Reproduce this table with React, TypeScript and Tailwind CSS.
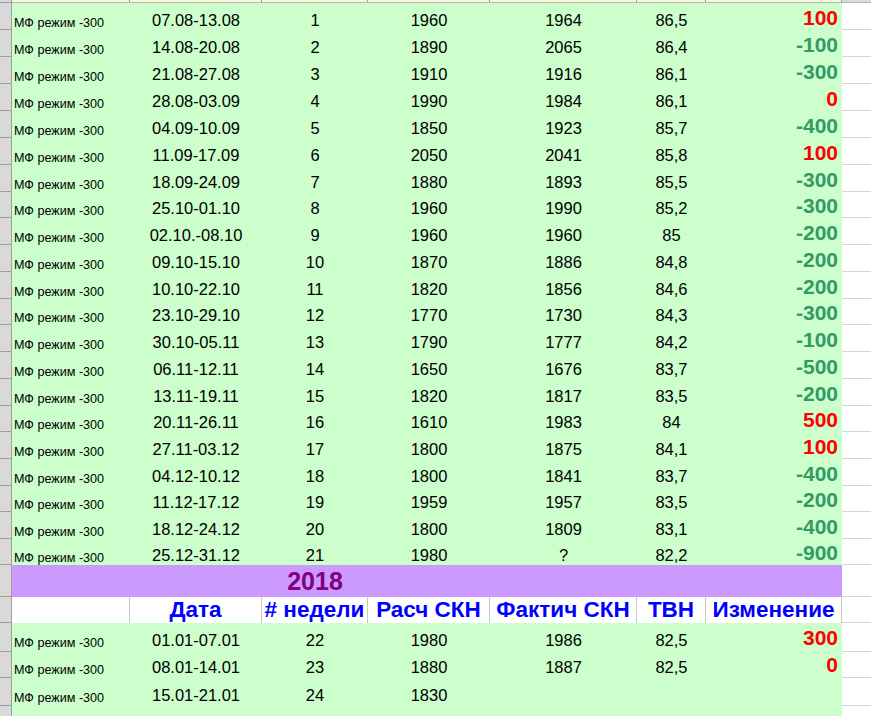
import React from 'react';

// Weekly rows: date range, week number, calc, fact, TVN, change
const rows2017: string[][] = [
  ['07.08-13.08', '1', '1960', '1964', '86,5', '100'],
  ['14.08-20.08', '2', '1890', '2065', '86,4', '-100'],
  ['21.08-27.08', '3', '1910', '1916', '86,1', '-300'],
  ['28.08-03.09', '4', '1990', '1984', '86,1', '0'],
  ['04.09-10.09', '5', '1850', '1923', '85,7', '-400'],
  ['11.09-17.09', '6', '2050', '2041', '85,8', '100'],
  ['18.09-24.09', '7', '1880', '1893', '85,5', '-300'],
  ['25.10-01.10', '8', '1960', '1990', '85,2', '-300'],
  ['02.10.-08.10', '9', '1960', '1960', '85', '-200'],
  ['09.10-15.10', '10', '1870', '1886', '84,8', '-200'],
  ['10.10-22.10', '11', '1820', '1856', '84,6', '-200'],
  ['23.10-29.10', '12', '1770', '1730', '84,3', '-300'],
  ['30.10-05.11', '13', '1790', '1777', '84,2', '-100'],
  ['06.11-12.11', '14', '1650', '1676', '83,7', '-500'],
  ['13.11-19.11', '15', '1820', '1817', '83,5', '-200'],
  ['20.11-26.11', '16', '1610', '1983', '84', '500'],
  ['27.11-03.12', '17', '1800', '1875', '84,1', '100'],
  ['04.12-10.12', '18', '1800', '1841', '83,7', '-400'],
  ['11.12-17.12', '19', '1959', '1957', '83,5', '-200'],
  ['18.12-24.12', '20', '1800', '1809', '83,1', '-400'],
  ['25.12-31.12', '21', '1980', '?', '82,2', '-900'],
];

const heights2017 = [27, 27, 27, 27, 27, 27, 27, 26, 27, 27, 27, 26, 27, 27, 27, 26, 27, 27, 26, 27, 26];

const rows2018: { cells: string[]; h: string; pb: string }[] = [
  { cells: ['01.01-07.01', '22', '1980', '1986', '82,5', '300'], h: 'h-[29px]', pb: 'pb-[2px]' },
  { cells: ['08.01-14.01', '23', '1880', '1887', '82,5', '0'], h: 'h-[26px]', pb: 'pb-[1px]' },
  { cells: ['15.01-21.01', '24', '1830', '', '', ''], h: 'h-[28px]', pb: 'pb-[1px]' },
];

const cols = 'grid grid-cols-[118px_132px_106px_122px_147px_69px_136px] w-[830px] shrink-0';
const headers = ['Дата', '# недели', 'Расч СКН', 'Фактич СКН', 'ТВН', 'Изменение'];

function RowHead() {
  return <div className="w-[12px] shrink-0 bg-[#d9d9d9] border-r border-b border-[#9f9f9f]" />;
}

function RightCell({ bg = 'bg-white' }: { bg?: string }) {
  return <div className={`flex-1 ${bg} border-b border-[#d4d4d4]`} />;
}

function DataRow({ cells, h, pb }: { cells: string[]; h: string; pb: string }) {
  const change = cells[5];
  const changeColor = change.startsWith('-') ? 'text-[#339966]' : 'text-[#ff0000]';
  return (
    <div className={`flex ${h}`}>
      <RowHead />
      <div className={`${cols} bg-[#ccffcc] text-black leading-[1.15]`}>
        <div className={`flex items-end pl-[2px] text-[12.6px] ${pb}`}>МФ режим -300</div>
        <div className={`flex items-end justify-center text-[16.5px] ${pb}`}>{cells[0]}</div>
        <div className={`flex items-end justify-center text-[16.5px] ${pb}`}>{cells[1]}</div>
        <div className={`flex items-end justify-center text-[16.5px] ${pb}`}>{cells[2]}</div>
        <div className={`flex items-end justify-center text-[16.5px] ${pb}`}>{cells[3]}</div>
        <div className={`flex items-end justify-center text-[16.5px] ${pb}`}>{cells[4]}</div>
        <div className={`flex items-end justify-end pr-[4px] text-[21px] font-bold ${changeColor} ${pb}`}>
          {change}
        </div>
      </div>
      <RightCell />
    </div>
  );
}

export default function App() {
  return (
    <div className="w-[871px] h-[716px] overflow-hidden bg-white font-['Liberation_Sans',Arial,sans-serif]">
      {/* sliver of the row above */}
      <div className="flex h-[3px]">
        <div className="w-[12px] shrink-0 bg-[#d9d9d9] border-r border-b border-[#9f9f9f]" />
        <div className={`${cols} bg-[#fbf7dc] border-b border-[#b5b5b5]`}>
          {Array.from({ length: 7 }).map((_, i) => (
            <div key={i} className="border-r border-[#9a9a9a]" />
          ))}
        </div>
        <div className="flex-1 bg-[#dcdcdc] border-b border-[#b5b5b5]" />
      </div>

      {rows2017.map((r, i) => (
        <DataRow key={i} cells={r} h={heights2017[i] === 27 ? 'h-[27px]' : 'h-[26px]'} pb="pb-0" />
      ))}

      {/* year band */}
      <div className="flex h-[32px]">
        <RowHead />
        <div className={`${cols} bg-[#cc99ff]`}>
          <div className="col-start-3 flex items-center justify-center text-[25px] font-bold text-[#800080] leading-none">
            2018
          </div>
        </div>
        <RightCell />
      </div>

      {/* column headers */}
      <div className="flex h-[26px]">
        <RowHead />
        <div className={`${cols} bg-white`}>
          <div className="border-r border-[#c8c8c8]" />
          {headers.map(h => (
            <div
              key={h}
              className="flex items-center justify-center border-r border-[#c8c8c8] text-[22.5px] font-bold text-[#0000ff] leading-none whitespace-nowrap"
            >
              {h}
            </div>
          ))}
        </div>
        <RightCell />
      </div>

      {rows2018.map((r, i) => (
        <DataRow key={i} cells={r.cells} h={r.h} pb={r.pb} />
      ))}

      <div className="flex h-[27px]">
        <RowHead />
        <div className={`${cols} bg-[#ccffcc]`} />
        <RightCell />
      </div>
    </div>
  );
}
